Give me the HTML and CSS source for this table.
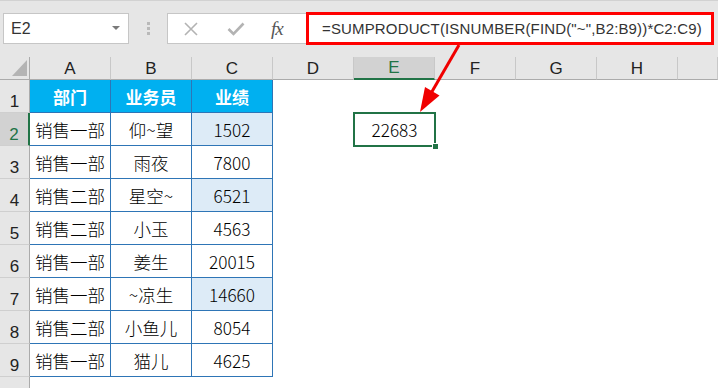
FILE: index.html
```html
<!DOCTYPE html>
<html>
<head>
<meta charset="utf-8">
<link rel="stylesheet" href="styles.css">
</head>
<body>
<div class="app">
  <div class="toolbar">
    <div class="namebox"><span class="ref">E2</span><span class="caret"></span></div>
    <div class="grip"><i></i><i></i><i></i></div>
    <div class="btns">
      <svg class="ico" width="16" height="16" viewBox="0 0 16 16"><path d="M2 2 L14 14 M14 2 L2 14" stroke="#b3b3b3" stroke-width="1.6" fill="none"/></svg>
      <svg class="ico" width="18" height="14" viewBox="0 0 18 14"><path d="M1.5 7 L6.5 12 L16.5 1.5" stroke="#b3b3b3" stroke-width="2.6" fill="none"/></svg>
      <span class="fx">fx</span>
    </div>
    <div class="formula">=SUMPRODUCT(ISNUMBER(FIND("~",B2:B9))*C2:C9)</div>
  </div>
  <div class="sheet">
    <div class="corner"><svg width="30" height="22" viewBox="0 0 30 22"><polygon points="27,3 27,19 12,19" fill="#b4b4b4"/></svg></div>
    <div class="ch">A</div><div class="ch">B</div><div class="ch">C</div><div class="ch">D</div>
    <div class="ch sel">E</div><div class="ch">F</div><div class="ch">G</div><div class="ch">H</div><div class="ch last"></div>

    <div class="rh">1</div><div class="c th">部门</div><div class="c th">业务员</div><div class="c th">业绩</div>
    <div class="rh sel">2</div><div class="c a">销售一部</div><div class="c">仰~望</div><div class="c n hl">1502</div><div class="active n">22683</div>
    <div class="rh">3</div><div class="c a">销售一部</div><div class="c">雨夜</div><div class="c n">7800</div>
    <div class="rh">4</div><div class="c a">销售二部</div><div class="c">星空~</div><div class="c n hl">6521</div>
    <div class="rh">5</div><div class="c a">销售二部</div><div class="c">小玉</div><div class="c n">4563</div>
    <div class="rh">6</div><div class="c a">销售一部</div><div class="c">姜生</div><div class="c n">20015</div>
    <div class="rh">7</div><div class="c a">销售一部</div><div class="c">~凉生</div><div class="c n hl">14660</div>
    <div class="rh">8</div><div class="c a">销售二部</div><div class="c">小鱼儿</div><div class="c n">8054</div>
    <div class="rh">9</div><div class="c a">销售一部</div><div class="c">猫儿</div><div class="c n">4625</div>
    <div class="rh end"></div>
  </div>
  <svg class="arrow" width="718" height="388" viewBox="0 0 718 388">
    <line x1="459" y1="45" x2="430" y2="95" stroke="#f00000" stroke-width="3"/>
    <polygon points="420,112 425,87 439.5,95.5" fill="#f00000"/>
  </svg>
</div>
</body>
</html>
```

FILE: styles.css
```css
html, body {
  margin: 0;
  padding: 0;
  background: #ffffff;
}
.app {
  position: relative;
  width: 718px;
  height: 388px;
  overflow: hidden;
  font-family: "Liberation Sans", "Noto Sans CJK SC", sans-serif;
}
.toolbar {
  height: 57px;
  box-sizing: border-box;
  background: #e6e6e6;
  border-top: 1px solid #d2d2d2;
  padding-top: 11px;
  display: flex;
  align-items: flex-start;
}
.namebox {
  margin-left: 3px;
  margin-top: 1px;
  width: 126px;
  height: 31px;
  box-sizing: border-box;
  background: #fff;
  border: 1px solid #c6c6c6;
  display: flex;
  align-items: center;
  justify-content: space-between;
  padding: 0 8px 0 7px;
}
.ref {
  font-size: 16px;
  color: #333;
}
.caret {
  width: 0;
  height: 0;
  border-left: 4px solid transparent;
  border-right: 4px solid transparent;
  border-top: 4px solid #7a7a7a;
  margin-top: -2px;
}
.grip {
  margin-left: 18px;
  margin-top: 10px;
  width: 3px;
  display: flex;
  flex-direction: column;
  gap: 2px;
}
.grip i {
  display: block;
  width: 3px;
  height: 3px;
  background: #b9b9b9;
}
.btns {
  margin-left: 17px;
  margin-top: 1px;
  width: 139px;
  height: 31px;
  box-sizing: border-box;
  background: #fff;
  border: 1px solid #c6c6c6;
  border-right: none;
  display: flex;
  align-items: center;
  padding-left: 15px;
}
.btns .ico:nth-child(2) {
  margin-left: 28px;
}
.fx {
  margin-left: 26px;
  font-family: "Liberation Serif", serif;
  font-style: italic;
  font-size: 19px;
  color: #555;
  letter-spacing: -1px;
}
.formula {
  width: 408px;
  height: 33px;
  box-sizing: border-box;
  border: 3px solid #ff0000;
  background: #fff;
  padding-left: 13px;
  font-size: 15px;
  letter-spacing: 0.15px;
  line-height: 27px;
  color: #333;
  white-space: nowrap;
  overflow: hidden;
}
.sheet {
  display: grid;
  grid-template-columns: 30px repeat(8, 81px) 1fr;
  grid-template-rows: 23px repeat(9, 33px) 1fr;
  height: 331px;
}
.corner {
  background: #e6e6e6;
  border-right: 1px solid #ababab;
  border-bottom: 1px solid #ababab;
  box-sizing: border-box;
}
.corner svg {
  display: block;
}
.ch {
  background: #e6e6e6;
  border-right: 1px solid #c8c8c8;
  border-bottom: 1px solid #ababab;
  box-sizing: border-box;
  display: flex;
  align-items: center;
  justify-content: center;
  font-size: 17px;
  color: #222;
  padding-top: 1px;
}
.ch.sel {
  background: #d2d2d2;
  color: #217346;
  border-bottom: 2px solid #217346;
}
.rh {
  grid-column: 1;
  background: #e6e6e6;
  border-right: 1px solid #ababab;
  border-bottom: 1px solid #cfcfcf;
  box-sizing: border-box;
  display: flex;
  align-items: flex-end;
  justify-content: center;
  font-size: 17px;
  line-height: 17px;
  padding-bottom: 2px;
  color: #222;
}
.rh.sel {
  background: #d2d2d2;
  color: #217346;
  border-right: 2px solid #217346;
}
.rh.end {
  border-bottom: none;
}
.c {
  box-sizing: border-box;
  border-right: 1px solid #2e75b6;
  border-bottom: 1px solid #2e75b6;
  display: flex;
  align-items: center;
  justify-content: center;
  font-family: "Noto Sans CJK SC", sans-serif;
  font-size: 17.5px;
  font-weight: 300;
  color: #000;
}
.c.a {
  justify-content: flex-start;
  padding-left: 5px;
}
.c.th {
  background: #00b0f0;
  color: #fff;
  font-weight: bold;
  font-size: 17px;
}
.c.hl {
  background: #ddebf7;
}
.n {
  font-family: "Noto Sans CJK SC", sans-serif;
  font-size: 17.2px;
  font-weight: 300;
  color: #000;
}
.active {
  grid-column: 6;
  position: relative;
  display: flex;
  align-items: center;
  justify-content: center;
}
.active::before {
  content: "";
  position: absolute;
  left: -1px;
  top: -1px;
  right: -1px;
  bottom: -1px;
  border: 2px solid #217346;
}
.active::after {
  content: "";
  position: absolute;
  right: -3px;
  bottom: -3px;
  width: 5px;
  height: 5px;
  background: #217346;
  border: 1px solid #fff;
  border-right: none;
  border-bottom: none;
}
.arrow {
  position: absolute;
  left: 0;
  top: 0;
  pointer-events: none;
}
```
